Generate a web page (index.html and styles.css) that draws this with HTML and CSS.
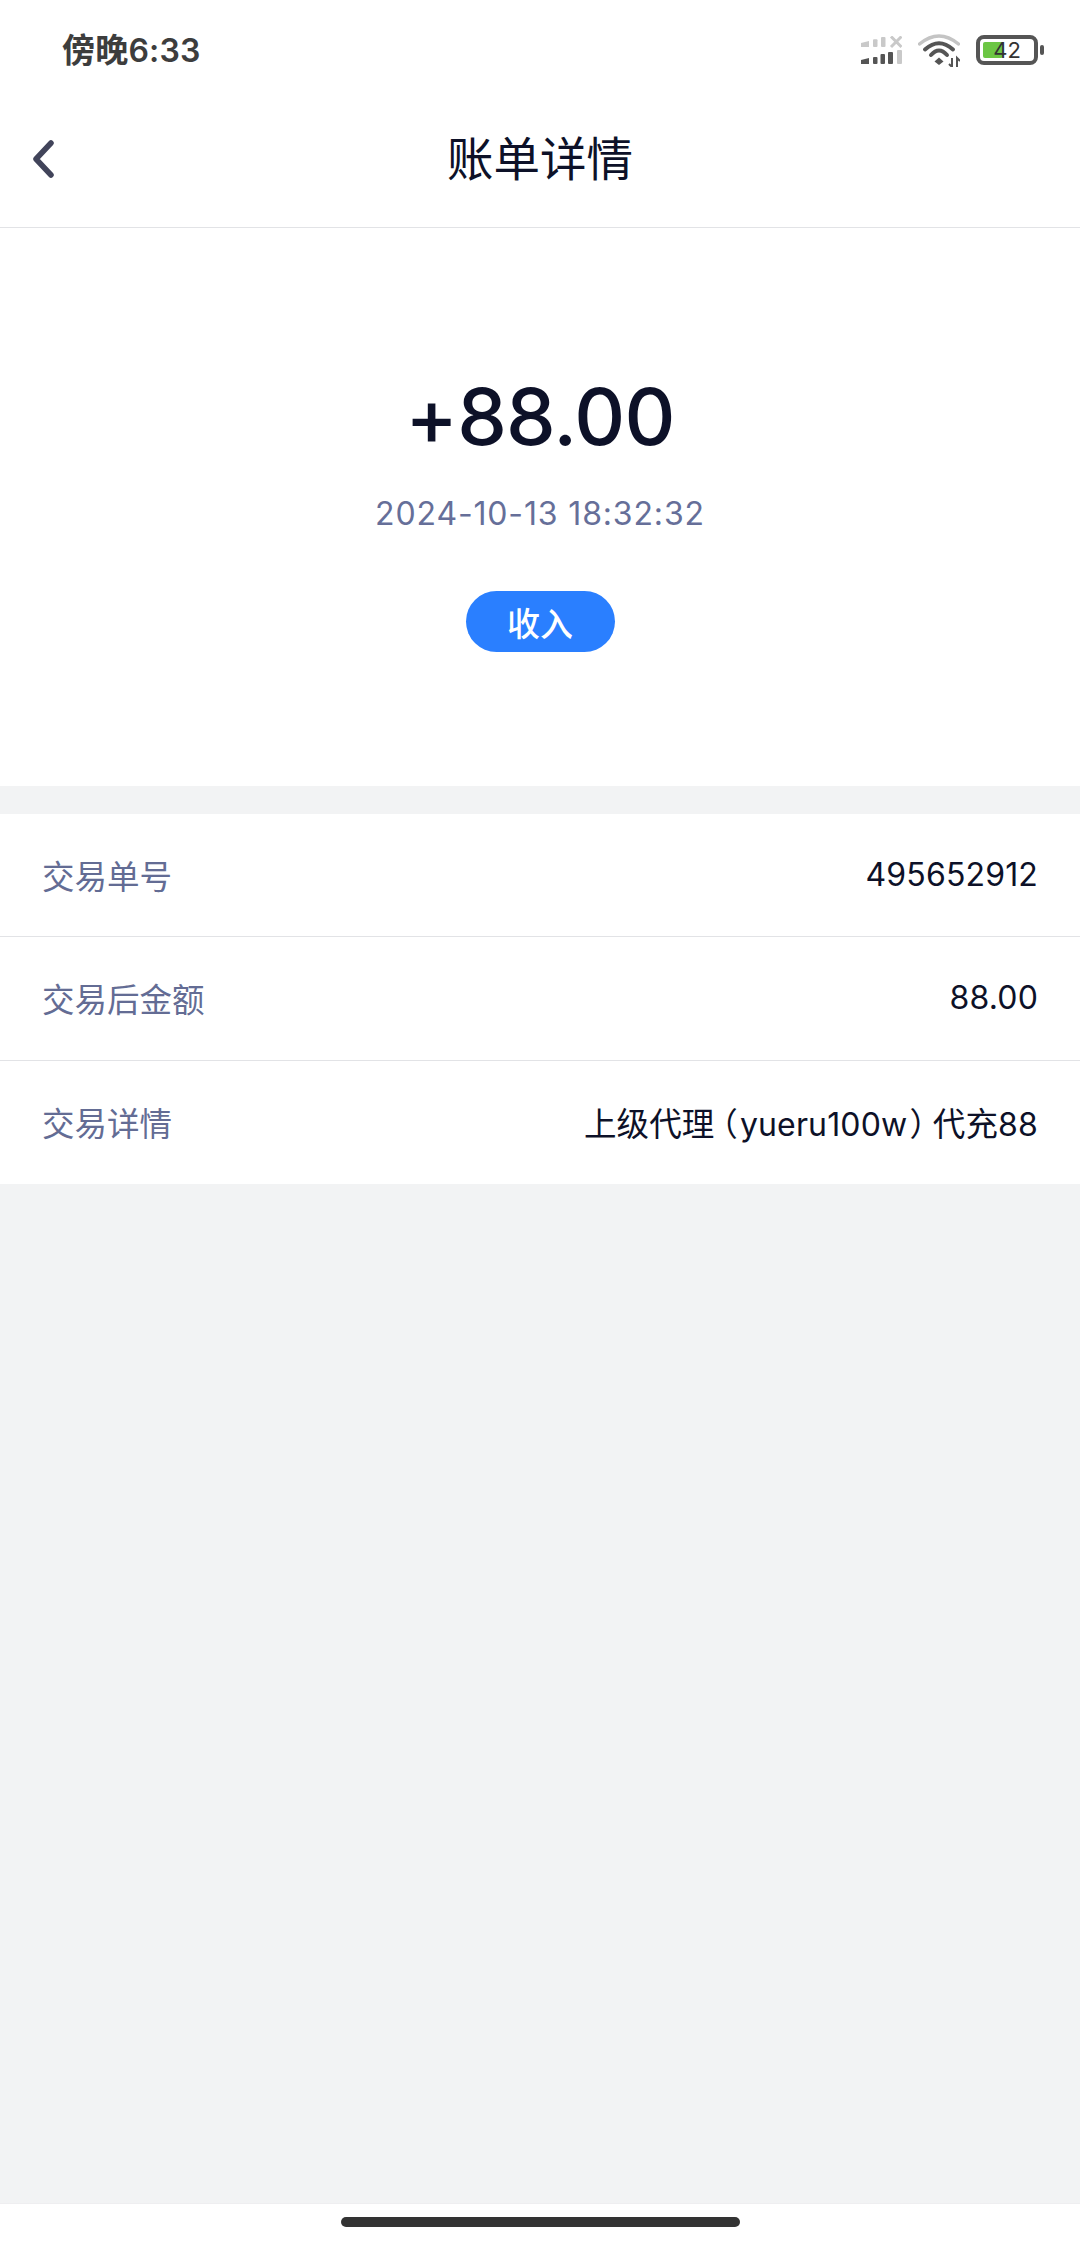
FILE: index.html
```html
<!DOCTYPE html>
<html lang="zh-CN">
<head>
  <meta charset="UTF-8" />
  <meta name="viewport" content="width=device-width, initial-scale=1.0" />
  <title>账单详情</title>
  <link rel="stylesheet" href="styles.css">
</head>
<body>
  <div class="page">
    <div class="status-bar">
      <span class="status-time"><span class="status-cjk">傍晚</span>6:33</span>
      <div class="status-icons">
        <svg class="icon-signal" width="41" height="28" viewBox="0 0 41 28">
          <g fill="#c9c9c9">
            <path d="M0 7l8-2v6h-8z"/><rect x="12" y="3.300" width="4.500" height="7.700" rx="1"/><rect x="20" y="1" width="4.500" height="10" rx="1"/>
            <rect x="36" y="14" width="5" height="14" rx="1"/>
          </g>
          <path d="M30 0.500l10.500 10.500M40.500 0.500l-10.500 10.500" stroke="#c9c9c9" stroke-width="3" fill="none"/>
          <g fill="#555">
            <path d="M0 24l8-2v6h-8z"/><rect x="12" y="21" width="4.500" height="7" rx="1"/><rect x="19.500" y="18" width="4.500" height="10" rx="1"/><rect x="27" y="16" width="5" height="12" rx="1"/>
          </g>
        </svg>
        <svg class="icon-wifi" width="42" height="33" viewBox="0 0 42 33">
          <path d="M1.500 10Q21 -6 40.500 10" fill="none" stroke="#c4c4c4" stroke-width="3.500" stroke-linecap="round"/>
          <path d="M7 15.500Q21 3 35 15.500" fill="none" stroke="#555" stroke-width="4" stroke-linecap="round"/>
          <path d="M13 21Q21 12 29 21" fill="none" stroke="#555" stroke-width="4" stroke-linecap="round"/>
          <path d="M16.500 27.500l4.500-4 4.500 4-4.500 3.500z" fill="#555"/>
          <path d="M34 24v9l-3-3M39 33v-9l3 3" fill="none" stroke="#555" stroke-width="2"/>
        </svg>
        <div class="battery">
          <div class="battery-body">
            <div class="battery-fill"></div>
            <span class="battery-level">42</span>
          </div>
          <div class="battery-cap"></div>
        </div>
      </div>
    </div>

    <div class="nav-bar">
      <svg class="back-icon" width="22" height="38" viewBox="0 0 22 38">
        <path d="M19 3L4 19l15 16" fill="none" stroke="#41445a" stroke-width="5.500" stroke-linecap="round" stroke-linejoin="round"/>
      </svg>
      <h1 class="nav-title">账单详情</h1>
    </div>

    <div class="summary">
      <div class="amount">+88.00</div>
      <div class="time">2024-10-13 18:32:32</div>
      <div class="badge">收入</div>
    </div>

    <div class="details">
      <div class="row">
        <span class="row-label">交易单号</span>
        <span class="row-value">495652912</span>
      </div>
      <div class="row">
        <span class="row-label">交易后金额</span>
        <span class="row-value">88.00</span>
      </div>
      <div class="row">
        <span class="row-label">交易详情</span>
        <span class="row-value"><span class="cjk">上级代理<span class="paren-open">（</span></span>yueru100w<span class="cjk"><span class="paren-close">）</span>代充</span>88</span>
      </div>
    </div>

    <div class="spacer"></div>

    <div class="home-area">
      <div class="home-bar"></div>
    </div>
  </div>
</body>
</html>
```

FILE: styles.css
```css
* {
  box-sizing: border-box;
}
body {
  margin: 0;
  background: #f2f3f4;
  font-family: Inter, 'Noto Sans CJK SC', sans-serif;
}
.page {
  width: 1080px;
  height: 2248px;
  display: flex;
  flex-direction: column;
}
.status-bar {
  height: 90px;
  background: white;
  display: flex;
  align-items: center;
  justify-content: space-between;
  padding: 10px 36px 0 62px;
}
.status-time {
  font-size: 32px;
  line-height: 40px;
  font-weight: 600;
  letter-spacing: 0.200px;
  color: #3d3d3d;
}
.status-cjk {
  font-size: 33px;
}
.status-icons {
  display: flex;
  align-items: center;
  gap: 16px;
}
.battery {
  display: flex;
  align-items: center;
  gap: 2px;
}
.battery-body {
  width: 62px;
  height: 30px;
  border: 4px solid #555;
  border-radius: 8px;
  padding: 3px;
  display: flex;
  position: relative;
}
.battery-fill {
  width: 20px;
  background: #6cc644;
  border-radius: 2px;
}
.battery-level {
  position: absolute;
  top: 0;
  bottom: 0;
  left: 0;
  right: 0;
  display: flex;
  align-items: center;
  justify-content: center;
  font-size: 22px;
  color: #333;
}
.battery-cap {
  width: 4px;
  height: 10px;
  background: #555;
  border-radius: 2px;
}
.nav-bar {
  height: 138px;
  background: white;
  border-bottom: 1px solid #e2e3e6;
  display: flex;
  align-items: center;
  justify-content: center;
  position: relative;
}
.back-icon {
  position: absolute;
  left: 32px;
  top: 50px;
}
.nav-title {
  margin: 0 0 6px;
  font-size: 46.500px;
  font-weight: 400;
  color: #0d1128;
}
.summary {
  height: 558px;
  background: white;
  display: flex;
  flex-direction: column;
  align-items: center;
  padding-top: 140px;
}
.amount {
  font-size: 79px;
  font-weight: 450;
  letter-spacing: -0.800px;
  line-height: 96px;
  color: #0d1128;
}
.time {
  margin-top: 28px;
  font-size: 32px;
  letter-spacing: 0.850px;
  line-height: 44px;
  color: #666f99;
}
.badge {
  margin-top: 55px;
  width: 149px;
  height: 61px;
  border-radius: 31px;
  background: #2a7fff;
  color: white;
  font-size: 33px;
  font-weight: 500;
  display: flex;
  align-items: center;
  justify-content: center;
}
.details {
  margin-top: 28px;
  background: white;
}
.row {
  height: 123.333px;
  display: flex;
  align-items: center;
  justify-content: space-between;
  padding: 0 42px 1px;
  font-size: 32px;
  border-bottom: 1px solid #e2e3e6;
}
.row:last-child {
  border-bottom: none;
}
.row-label {
  font-size: 32.500px;
  color: #636c94;
}
.row-value {
  color: #0d1128;
  letter-spacing: 0.150px;
}
.cjk {
  font-size: 32.500px;
}
.paren-open {
  font-feature-settings: "halt";
  padding: 0 2px 0 7px;
}
.paren-close {
  font-feature-settings: "halt";
  padding: 0 7px 0 2px;
}
.spacer {
  flex: 1;
}
.home-area {
  height: 45px;
  background: white;
  border-top: 1px solid #eeeef0;
  padding-top: 13px;
  display: flex;
  justify-content: center;
}
.home-bar {
  width: 399px;
  height: 10px;
  border-radius: 5px;
  background: #333;
}
```
